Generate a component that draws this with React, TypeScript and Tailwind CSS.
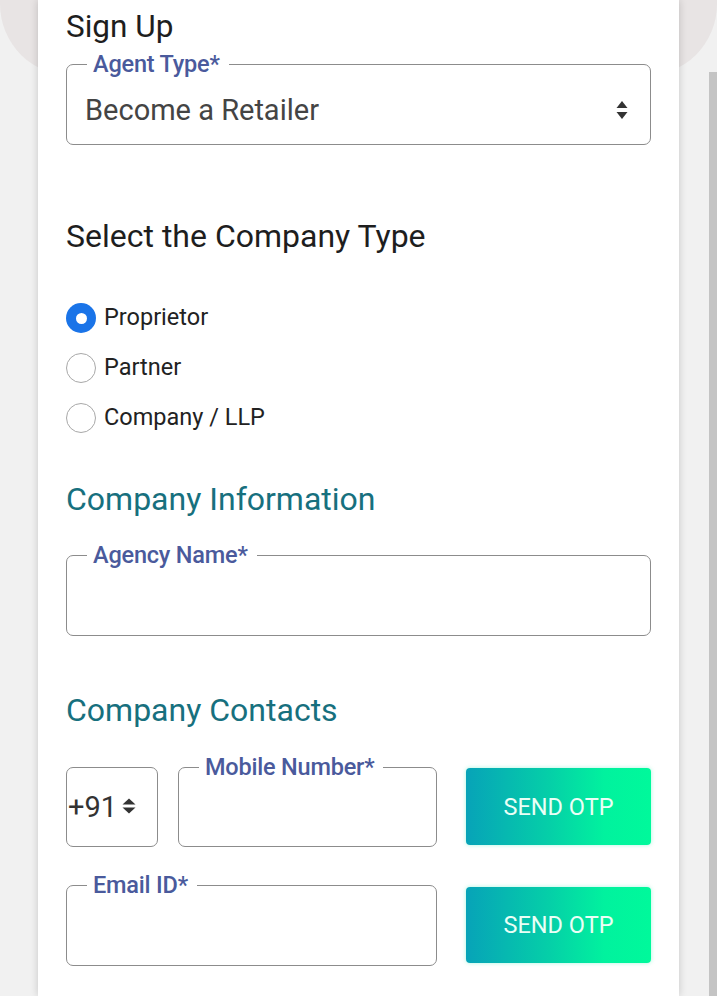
import React from "react";

const Arrows = ({ className }: { className?: string }) => (
  <svg viewBox="0 0 12 20" className={className} fill="currentColor">
    <path d="M6 1 L11.5 8 L0.5 8 Z" />
    <path d="M0.5 12 L11.5 12 L6 19 Z" />
  </svg>
);

const WideArrows = ({ className }: { className?: string }) => (
  <svg viewBox="0 0 14 16" className={className} fill="currentColor">
    <path d="M7 0.5 L13.5 6.5 L0.5 6.5 Z" />
    <path d="M0.5 9.5 L13.5 9.5 L7 15.5 Z" />
  </svg>
);

const Field = ({
  label,
  className,
  children,
}: {
  label: string;
  className?: string;
  children?: React.ReactNode;
}) => (
  <fieldset
    className={
      "box-border h-[94px] rounded-[7px] border border-[#8c8c8c] pl-[20px] pr-[20px] pb-[2px] m-0 flex flex-col " +
      (className || "")
    }
  >
    <legend className="pl-[6px] pr-[9px] text-[23.5px] leading-[26px] font-medium text-[#4a5a9c] tracking-[-0.2px]">
      {label}
    </legend>
    {children}
  </fieldset>
);

const Radio = ({ label, checked }: { label: string; checked?: boolean }) => (
  <div className="flex h-[50px] items-center gap-[8px]">
    {checked ? (
      <span className="flex h-[30px] w-[30px] items-center justify-center rounded-full bg-[#1a74e8]">
        <span className="h-[11px] w-[11px] rounded-full bg-white" />
      </span>
    ) : (
      <span className="h-[30px] w-[30px] rounded-full border border-[#a8a8a8] bg-white" />
    )}
    <span className="-mt-[3px] text-[23.5px] leading-[28px] text-[#222]">{label}</span>
  </div>
);

const OtpButton = ({ className }: { className?: string }) => (
  <button
    className={
      "h-[77px] w-[185px] rounded-[4px] bg-[linear-gradient(90deg,#07a3b8_0%,#05cfa8_45%,#01f29e_75%,#00f99b_100%)] text-[23.5px] leading-[28px] text-[#eafff6] shadow-[0_0_4px_rgba(0,230,160,0.35)] " +
      (className || "")
    }
  >
    SEND OTP
  </button>
);

export default function App() {
  return (
    <div
      className="relative min-h-[996px] w-full overflow-hidden bg-[#f1f1f1]"
      style={{ fontFamily: "Roboto, 'Noto Sans', Arial, sans-serif" }}
    >
      <div className="absolute inset-x-0 top-0 h-[76px] rounded-b-[72px] bg-[#e8e4e4]" />
      <div className="absolute right-0 top-[72px] bottom-0 w-[8px] bg-[#c4c4c4]" />
      <div className="relative z-10 ml-[38px] min-h-[996px] w-[641px] bg-white px-[28px] pt-[9px] shadow-[0_0_8px_rgba(0,0,0,0.18)]">
        <h1 className="text-[31.5px] leading-[36px] text-[#1e1e1e]">Sign Up</h1>

        <Field label="Agent Type*" className="mt-[6px]">
          <div className="flex flex-1 items-center justify-between">
            <span className="-ml-[2px] text-[29px] leading-[34px] text-[#444]">Become a Retailer</span>
            <Arrows className="mr-[2px] h-[20px] w-[12px] text-[#333]" />
          </div>
        </Field>

        <h2 className="mt-[73px] text-[32px] leading-[36px] text-[#1e1e1e]">
          Select the Company Type
        </h2>

        <div className="mt-[39px] flex flex-col">
          <Radio label="Proprietor" checked />
          <Radio label="Partner" />
          <Radio label="Company / LLP" />
        </div>

        <h2 className="mt-[38px] text-[32px] leading-[36px] text-[#17707e]">
          Company Information
        </h2>

        <Field label="Agency Name*" className="mt-[25px]" />

        <h2 className="mt-[56px] text-[32px] leading-[36px] text-[#17707e]">
          Company Contacts
        </h2>

        <div className="mt-[26px] flex items-end">
          <div className="box-border flex h-[80px] w-[92px] items-center rounded-[7px] border border-[#8c8c8c] pl-[1px]">
            <span className="text-[29px] leading-[34px] text-[#333]">+91</span>
            <WideArrows className="ml-[5px] -mt-[2px] h-[16px] w-[14px] text-[#333]" />
          </div>
          <Field label="Mobile Number*" className="ml-[20px] w-[259px] !h-[93px]" />
          <OtpButton className="ml-[29px] mb-[2px]" />
        </div>

        <div className="mt-[25px] flex items-end">
          <Field label="Email ID*" className="w-[371px]" />
          <OtpButton className="ml-[29px] mb-[3px] !h-[76px]" />
        </div>
      </div>
    </div>
  );
}
